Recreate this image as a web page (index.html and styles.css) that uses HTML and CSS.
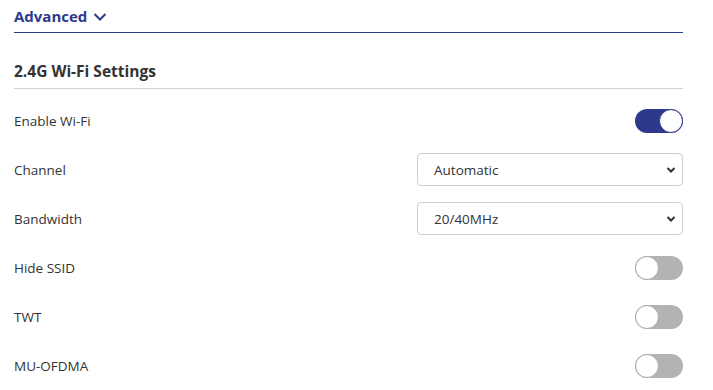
FILE: index.html
```html
<!DOCTYPE html>
<html lang="en">
<head>
  <meta charset="UTF-8">
  <meta name="viewport" content="width=device-width, initial-scale=1.0">
  <title>2.4G Wi-Fi Settings</title>
  <link rel="stylesheet" href="styles.css">
</head>
<body>
  <div class="page">
    <!-- Advanced başlığı -->
    <div class="advanced">
      <span>Advanced</span>
      <svg class="chev" width="14" height="10" viewBox="0 0 14 10">
        <path d="M1.5 2 L7 7.5 L12.5 2" fill="none" stroke="#2d3a8c" stroke-width="2"/>
      </svg>
    </div>

    <!-- Wi-Fi ayarları -->
    <div class="section-title">2.4G Wi-Fi Settings</div>

    <div class="row">
      <span class="label">Enable Wi-Fi</span>
      <span class="toggle on"><span class="knob"></span></span>
    </div>
    <div class="row">
      <span class="label">Channel</span>
      <div class="select">
        <span>Automatic</span>
        <svg width="10" height="8" viewBox="0 0 10 8"><path d="M1.5 2 L5 5.5 L8.5 2" fill="none" stroke="#333" stroke-width="2"/></svg>
      </div>
    </div>
    <div class="row">
      <span class="label">Bandwidth</span>
      <div class="select">
        <span>20/40MHz</span>
        <svg width="10" height="8" viewBox="0 0 10 8"><path d="M1.5 2 L5 5.5 L8.5 2" fill="none" stroke="#333" stroke-width="2"/></svg>
      </div>
    </div>
    <div class="row">
      <span class="label">Hide SSID</span>
      <span class="toggle"><span class="knob"></span></span>
    </div>
    <div class="row">
      <span class="label">TWT</span>
      <span class="toggle"><span class="knob"></span></span>
    </div>
    <div class="row">
      <span class="label">MU-OFDMA</span>
      <span class="toggle"><span class="knob"></span></span>
    </div>
  </div>
</body>
</html>
```

FILE: styles.css
```css
/* Ümumi stil */
body {
  margin: 0;
  padding: 0;
  background-color: #ffffff;
  font-family: "Open Sans", "Noto Sans", Arial, sans-serif;
  color: #333;
  overflow: hidden;
}

.page {
  padding: 0 30px 0 14px;
}

/* Advanced başlığı */
.advanced {
  height: 32px;
  display: flex;
  align-items: center;
  gap: 6px;
  border-bottom: 1px solid #2d3a8c;
  color: #2d3a8c;
  font-size: 15px;
  font-weight: 700;
}

.chev {
  margin-top: 1px;
}

.section-title {
  margin-top: 21px;
  height: 34px;
  display: flex;
  align-items: center;
  border-bottom: 1px solid #d0d0d0;
  font-size: 15.5px;
  font-weight: 700;
  color: #333;
}

.section-title + .row {
  margin-top: 7px;
}

/* Sətirlər */
.row {
  height: 49px;
  display: flex;
  justify-content: space-between;
  align-items: center;
}

.label {
  font-size: 13.5px;
}

/* Açar düymə */
.toggle {
  width: 48px;
  height: 24px;
  border-radius: 12px;
  background-color: #b3b3b3;
  position: relative;
  display: block;
}

.toggle .knob {
  position: absolute;
  top: 0;
  left: 0;
  width: 22px;
  height: 22px;
  border-radius: 50%;
  background: #fff;
  border: 1px solid #a8a8a8;
}

.toggle.on {
  background-color: #2d3a8c;
}

.toggle.on .knob {
  left: auto;
  right: 0;
  border-color: #2d3a8c;
}

/* Seçim qutusu */
.select {
  width: 266px;
  height: 33px;
  box-sizing: border-box;
  border: 1px solid #cfcfcf;
  border-radius: 4px;
  display: flex;
  justify-content: space-between;
  align-items: center;
  padding: 0 6px 0 16px;
  font-size: 13.5px;
  color: #333;
}
```
